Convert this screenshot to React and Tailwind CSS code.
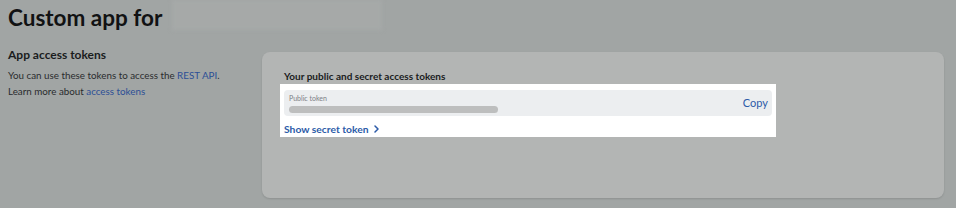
import React from 'react';

const App = () => {
  return (
    <div className="w-[956px] h-[208px] overflow-hidden bg-[#a1a5a4] font-['Lato',sans-serif] text-[#1a1c1d]">
      {/* Title row */}
      <div className="flex items-center h-[36px] pl-[8px]">
        <h1 className="text-[22.5px] font-bold leading-none text-[#111213]">Custom app for</h1>
        <div className="ml-[10px] w-[210px] h-[30px] -mt-[6px] bg-[#a6a9a8] blur-[2px]" />
      </div>

      <div className="flex pt-[11px]">
        {/* Left description */}
        <div className="w-[262px] pl-[8px] pr-[8px]">
          <h2 className="text-[12px] font-bold leading-[16px]">App access tokens</h2>
          <p className="mt-[4px] text-[9.8px] leading-[16px] text-[#2a2c2e]">
            You can use these tokens to access the <span className="text-[#2c4f96]">REST API</span>.
            <br />
            Learn more about <span className="text-[#2c4f96]">access tokens</span>
          </p>
        </div>

        {/* Card */}
        <div className="mt-[5px] w-[682px] h-[146px] rounded-[8px] bg-[#b3b5b4] shadow-[0_1px_2px_rgba(0,0,0,0.12)] pt-[17px] pl-[18px]">
          <h3 className="pl-[4px] text-[10px] font-bold leading-[14px]">Your public and secret access tokens</h3>
          <div className="mt-[1px] w-[496px] h-[53px] bg-white px-[4px] pt-[6px]">
            <div className="flex items-center h-[26px] rounded-[4px] bg-[#eceef0] pl-[5px] pr-[4px]">
              <div className="flex-1">
                <div className="text-[7px] leading-[8px] text-[#7c8086]">Public token</div>
                <div className="mt-[4px] w-[209px] h-[7px] rounded-full bg-[#bdbebe]" />
              </div>
              <span className="text-[11px] text-[#2c5ba8]">Copy</span>
            </div>
            <div className="mt-[6px] flex items-center gap-[5px] text-[10.3px] font-bold text-[#2c5ba8] leading-[14px]">
              Show secret token
              <svg width="7" height="8" viewBox="0 0 7 8" fill="none">
                <path d="M2 1l3 3-3 3" stroke="#2c5ba8" strokeWidth="1.5" strokeLinecap="round" strokeLinejoin="round" />
              </svg>
            </div>
          </div>
        </div>
      </div>
    </div>
  );
};

export default App;
